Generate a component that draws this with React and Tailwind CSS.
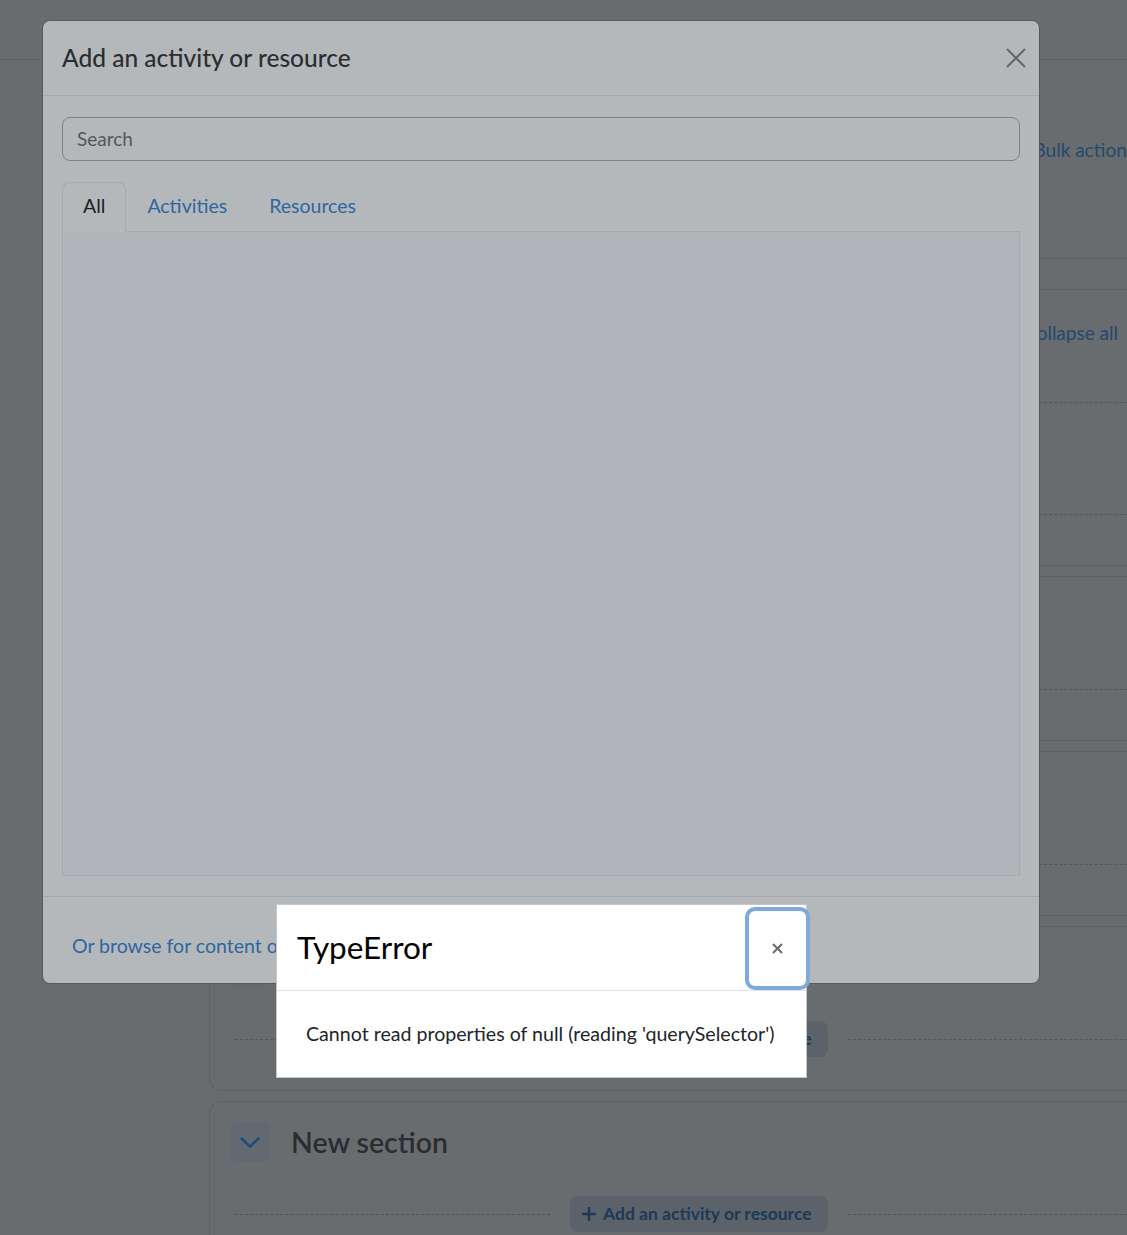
import React from 'react'

const Chevron = () => (
  <svg width="20" height="11" viewBox="0 0 20 11" fill="none">
    <path d="M1.5 1.5 10 9.5 18.5 1.5" stroke="currentColor" strokeWidth="2.5" strokeLinecap="round" strokeLinejoin="round" />
  </svg>
)

const Plus = () => (
  <svg width="14" height="14" viewBox="0 0 14 14" fill="none">
    <path d="M7 1v12M1 7h12" stroke="currentColor" strokeWidth="2.4" strokeLinecap="round" />
  </svg>
)

const AddRow = ({ className = '' }) => (
  <div className={`mx-[5px] flex h-9 items-center gap-5 ${className}`}>
    <div className="flex-1 border-t border-dashed border-[#53575b]" />
    <button className="flex h-9 w-[258px] items-center gap-[7px] rounded-lg bg-[#5b626a] pl-[12px] text-[17.5px] font-bold text-[#1c3956]">
      <Plus />
      <span>Add an activity or resource</span>
    </button>
    <div className="flex-1 border-t border-dashed border-[#53575b]" />
  </div>
)

const Section = ({ title, first }) => (
  <div className="rounded-xl border border-[#5d6064] px-5 pt-5 pb-[33px]">
    <div className="flex h-10 items-center">
      <div className="flex h-10 w-10 items-center justify-center rounded-lg bg-[#636971] text-[#1f4c78]">
        <Chevron />
      </div>
      <h3 className="ml-[21px] text-[28.5px] font-semibold text-[#2a2d31]">{title}</h3>
      {first && (
        <span className="mt-[6px] mr-[50px] ml-auto text-[19px] text-[#24496e]">Collapse all</span>
      )}
    </div>
    <AddRow className="mt-[34px]" />
    {first && <AddRow className="mt-[76px]" />}
  </div>
)

export default function App() {
  return (
    <div className="relative h-[1235px] w-full overflow-hidden bg-[#696c6f] font-['Lato',sans-serif]">
      {/* page behind both backdrops */}
      <div className="h-[60px] border-b border-[#5e6164]" />
      <div className="ml-[209px] w-[980px]">
        <div className="flex h-[199px] justify-end border-b border-[#5e6164] pt-[76px] pr-[54px]">
          <span className="text-[19px] leading-7 whitespace-nowrap text-[#24496e]">Bulk actions</span>
        </div>
        <div className="mt-[30px] flex flex-col gap-[10px]">
          <Section title="General" first />
          <Section title="Topic 1" />
          <Section title="Topic 2" />
          <Section title="Topic 3" />
          <Section title="New section" />
        </div>
      </div>

      {/* activity chooser modal */}
      <div className="absolute top-[20px] left-[42px] flex h-[964px] w-[998px] flex-col rounded-lg border border-[#56595c] bg-[#b5b8bb]">
        <div className="flex h-[75px] shrink-0 items-center justify-between border-b border-[#a6a9ad] pr-[13px] pl-[19px]">
          <h2 className="text-[24.5px] font-medium text-[#2b2e31]">Add an activity or resource</h2>
          <svg width="20" height="20" viewBox="0 0 20 20" fill="none" className="text-[#64676a]">
            <path d="M1 1l18 18M19 1 1 19" stroke="currentColor" strokeWidth="2" />
          </svg>
        </div>
        <div className="flex flex-1 flex-col px-[19px] pt-[21px] pb-5">
          <div className="flex h-[44px] items-center rounded-lg border border-[#7e838b] px-[14px]">
            <input
              placeholder="Search"
              className="w-full bg-transparent text-[19px] text-[#2b2e31] outline-none placeholder:text-[#53575b]"
            />
          </div>
          <div className="mt-[21px] flex border-b border-[#a6a9ad]">
            <div className="-mb-px flex h-[50px] items-center rounded-t-lg border border-[#a6a9ad] border-b-[#b5b8bb] bg-[#b5b8bb] px-5 pb-[3px] text-[19.5px] text-[#1d2023]">
              All
            </div>
            <div className="-mb-px flex h-[50px] items-center border border-transparent px-5 pb-[3px] text-[19.5px] text-[#2d66a0]">
              Activities
            </div>
            <div className="-mb-px flex h-[50px] items-center border border-transparent px-5 pb-[3px] text-[19.5px] text-[#2d66a0]">
              Resources
            </div>
          </div>
          <div className="flex-1 border-x border-b border-[#a6a9ad] bg-[#b1b4b8]" />
        </div>
        <div className="h-[87px] shrink-0 border-t border-[#a4a7ab] px-[29px] pt-[35px]">
          <span className="text-[19.5px] leading-7 text-[#2d66a0]">Or browse for content on MoodleNet</span>
        </div>
      </div>

      {/* error dialog */}
      <div className="absolute top-[904px] left-[276px] flex h-[174px] w-[531px] flex-col border border-[#c6c7c8] bg-white">
        <div className="flex h-[86px] shrink-0 items-center border-b border-[#dee2e6] pl-5">
          <h4 className="text-[31.5px] text-black">TypeError</h4>
          <button className="mt-[1px] ml-auto flex h-[75px] w-[57px] items-center justify-center rounded-md bg-white ring-4 ring-[#7eaadb]">
            <svg width="11" height="11" viewBox="0 0 11 11" fill="none" className="text-[#6b6b6b]">
              <path d="M1 1l9 9M10 1 1 10" stroke="currentColor" strokeWidth="2" />
            </svg>
          </button>
        </div>
        <div className="flex flex-1 items-center pl-[29px] text-[19.6px] text-[#212529]">
          Cannot read properties of null (reading 'querySelector')
        </div>
      </div>
    </div>
  )
}
